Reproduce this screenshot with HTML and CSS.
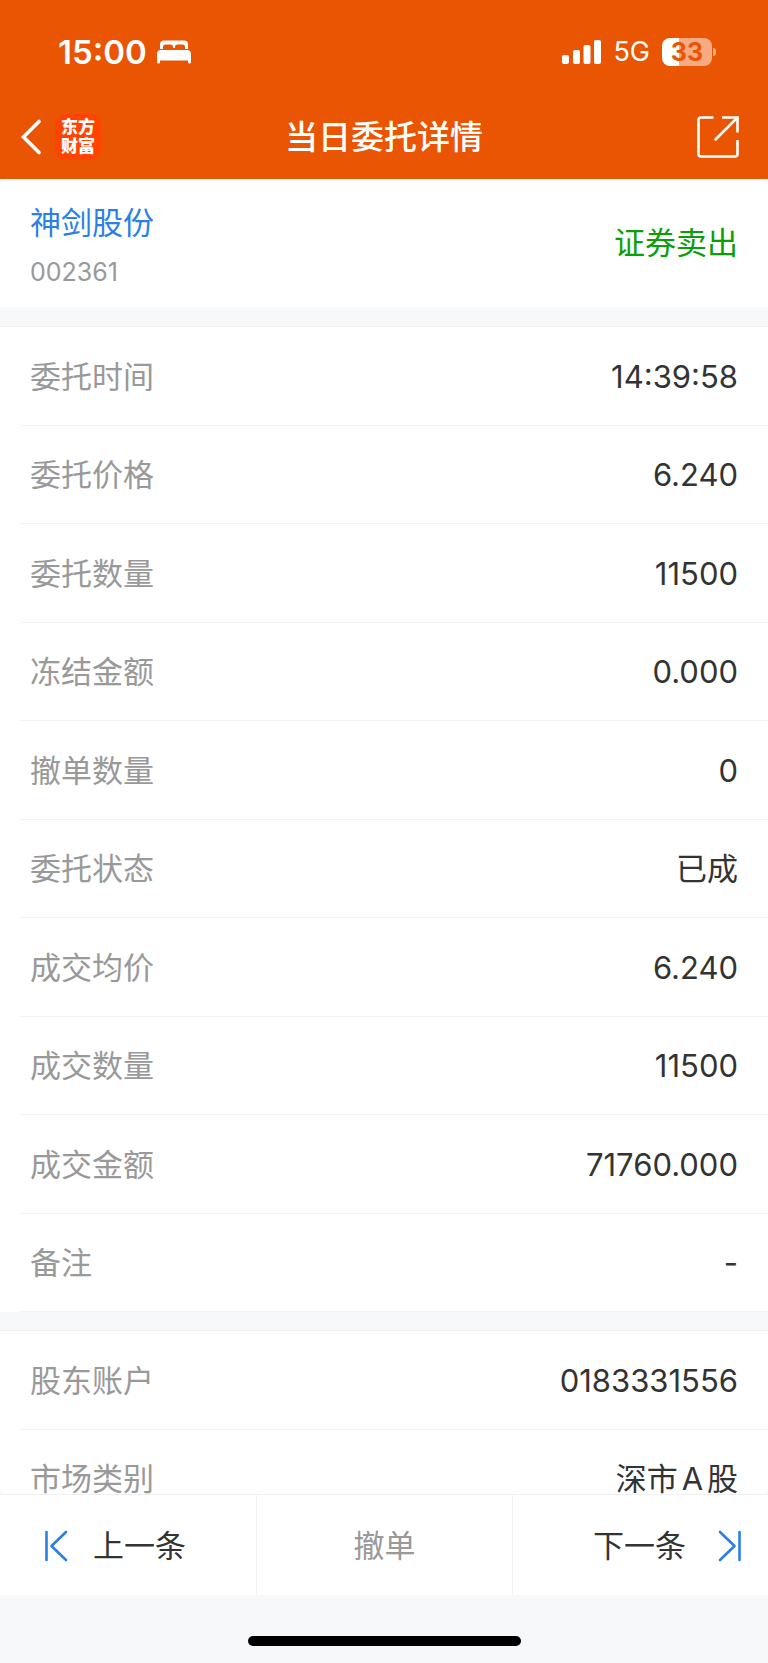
FILE: index.html
```html
<!DOCTYPE html>
<html lang="zh-CN">
<head>
<meta charset="utf-8">
<meta name="viewport" content="width=device-width, initial-scale=1">
<title>当日委托详情</title>
<link rel="stylesheet" href="styles.css">
</head>
<body>
<div class="app">
  <header class="header">
    <div class="status">
      <div class="status-left">
        <span class="clock">15:00</span>
        <svg class="bed" viewBox="0 0 34 24" width="34" height="24" aria-hidden="true">
          <path fill="#fff" d="M3 9V4.500Q3 .5 7 .5H27Q31 .5 31 4.500V9H28V7Q28 4.500 25.500 4.500H20.500Q18 4.500 18 7V8H16V7Q16 4.500 13.500 4.500H8.500Q6 4.500 6 7V9Z"/>
          <path fill="#fff" d="M4 10H30Q34 10 34 14V22Q34 23.500 32.500 23.500Q31 23.500 31 22V20.500H3V22Q3 23.500 1.500 23.500Q0 23.500 0 22V14Q0 10 4 10Z"/>
        </svg>
      </div>
      <div class="status-right">
        <svg class="signal" viewBox="0 0 39 24" width="39" height="24" aria-hidden="true" fill="#fff">
          <rect x="0" y="15" width="7" height="9" rx="2"/>
          <rect x="11" y="10" width="7" height="14" rx="2"/>
          <rect x="21.500" y="5" width="7" height="19" rx="2"/>
          <rect x="32" y="0" width="7" height="24" rx="2"/>
        </svg>
        <span class="network">5G</span>
        <span class="battery"><span class="battery-body">33</span><span class="battery-tip"></span></span>
      </div>
    </div>
    <nav class="nav">
      <div class="nav-left">
        <button class="icon-button" type="button" aria-label="返回">
          <svg viewBox="0 0 20 36" width="20" height="36" fill="none" stroke="#fff" stroke-width="3.600" stroke-linecap="round"><path d="M18 2.500 2.500 18 18 33.500"/></svg>
        </button>
        <span class="logo">东方<br>财富</span>
      </div>
      <h1 class="title">当日委托详情</h1>
      <div class="nav-right">
        <button class="icon-button" type="button" aria-label="分享">
          <svg viewBox="0 0 42 42" width="42" height="42" fill="none" stroke="#fff" stroke-width="2.600"><path d="M16.500 1.500H4Q1.500 1.500 1.500 4V38Q1.500 40.500 4 40.500H38Q40.500 40.500 40.500 38V24M25 1.500H40.500V16.500"/><path stroke-linecap="round" d="M40 2 18.500 23.500"/></svg>
        </button>
      </div>
    </nav>
  </header>

  <main class="content">
    <section class="stock">
      <div class="stock-id">
        <a class="stock-name" href="#">神剑股份</a>
        <span class="stock-code">002361</span>
      </div>
      <span class="side">证券卖出</span>
    </section>

    <dl class="list">
      <div class="row"><dt>委托时间</dt><dd>14:39:58</dd></div>
      <div class="row"><dt>委托价格</dt><dd>6.240</dd></div>
      <div class="row"><dt>委托数量</dt><dd>11500</dd></div>
      <div class="row"><dt>冻结金额</dt><dd>0.000</dd></div>
      <div class="row"><dt>撤单数量</dt><dd>0</dd></div>
      <div class="row"><dt>委托状态</dt><dd>已成</dd></div>
      <div class="row"><dt>成交均价</dt><dd>6.240</dd></div>
      <div class="row"><dt>成交数量</dt><dd>11500</dd></div>
      <div class="row"><dt>成交金额</dt><dd>71760.000</dd></div>
      <div class="row"><dt>备注</dt><dd>-</dd></div>
    </dl>

    <dl class="list">
      <div class="row"><dt>股东账户</dt><dd>0183331556</dd></div>
      <div class="row"><dt>市场类别</dt><dd>深市A股</dd></div>
    </dl>
  </main>

  <footer class="footer">
    <div class="actions">
      <button class="action action-prev" type="button">
        <svg viewBox="0 0 24 32" width="24" height="32" fill="none" stroke="#2b7fe6" stroke-width="2.600" stroke-linecap="round" stroke-linejoin="round" aria-hidden="true"><path d="M2.500 2V30M22 2 7.500 16 22 30"/></svg>
        上一条
      </button>
      <button class="action action-cancel" type="button" disabled>撤单</button>
      <button class="action action-next" type="button">
        下一条
        <svg viewBox="0 0 24 32" width="24" height="32" fill="none" stroke="#2b7fe6" stroke-width="2.600" stroke-linecap="round" stroke-linejoin="round" aria-hidden="true"><path d="M21.500 2V30M2 2 16.500 16 2 30"/></svg>
      </button>
    </div>
    <div class="home"><span class="home-bar"></span></div>
  </footer>
</div>
</body>
</html>
```
FILE: styles.css
```css
* {
  box-sizing: border-box;
}

body {
  margin: 0;
  background: #f6f8fa;
  color: #333;
  font-family: Inter, "Noto Sans CJK SC", sans-serif;
  font-size: 31px;
  line-height: 36px;
  text-autospace: normal;
}

svg {
  display: block;
  flex: none;
}

button {
  margin: 0;
  border: 0;
  background: none;
  color: inherit;
  font: inherit;
}

.app {
  display: flex;
  flex-direction: column;
  height: 100vh;
}

/* Header */

.header {
  flex: none;
  background: #ea5504;
  color: #fff;
}

.status {
  display: flex;
  justify-content: space-between;
  align-items: center;
  height: 103px;
  padding: 0 52px 0 58px;
}

.status-left,
.status-right,
.battery {
  display: flex;
  align-items: center;
}

.status-left {
  gap: 10px;
}

.status-right {
  gap: 12px;
}

.clock {
  font-size: 33px;
  font-weight: 600;
}

.network {
  font-size: 27px;
}

.battery {
  gap: 1px;
}

.battery-body {
  width: 50px;
  border-radius: 8px;
  background: linear-gradient(to right, #fff 17px, #f6ab82 17px);
  color: #ea5504;
  font-size: 25px;
  font-weight: 700;
  line-height: 28px;
  text-align: center;
}

.battery-tip {
  width: 3px;
  height: 8px;
  border-radius: 0 4px 4px 0;
  background: #f6ab82;
}

.nav {
  display: grid;
  grid-template-columns: 1fr auto 1fr;
  align-items: center;
  height: 76px;
  padding: 0 21px 8px;
}

.nav-left {
  display: flex;
  align-items: center;
  gap: 14px;
}

.nav-right {
  display: flex;
  justify-content: flex-end;
  padding-right: 8px;
}

.icon-button {
  padding: 0;
}

.logo {
  padding: 4px 6px;
  border-radius: 10px;
  background: #ff4300;
  font-size: 17px;
  font-weight: 900;
  line-height: 19px;
}

.title {
  margin: 0;
  font-size: 33px;
  font-weight: 500;
}

/* Scrolling content */

.content {
  flex: 1;
  min-height: 0;
  overflow: hidden;
  border-radius: 8px;
}

.stock {
  display: flex;
  justify-content: space-between;
  align-items: center;
  padding: 26px 30px 19px;
  background: #fff;
}

.stock-id {
  display: flex;
  flex-direction: column;
  gap: 15px;
}

.stock-name {
  color: #2b7fe6;
  text-decoration: none;
}

.stock-code {
  color: #999;
  font-size: 25px;
  line-height: 32px;
}

.side {
  padding-bottom: 8px;
  color: #07a007;
}

.list {
  margin: 19px 0 0;
  border-top: 1px solid #f0f0f0;
  background: #fff;
}

.list + .list {
  margin-top: 18px;
}

.row {
  display: flex;
  justify-content: space-between;
  align-items: center;
  height: 99px;
  margin-left: 20px;
  padding: 1px 30px 0 10px;
  border-bottom: 1px solid #f1f2f3;
}

.row:nth-child(even) {
  height: 98px;
}

.row dt {
  color: #999;
}

.row dd {
  margin: 0;
}

/* Bottom bar */

.footer {
  flex: none;
}

.actions {
  display: grid;
  grid-template-columns: repeat(3, 1fr);
  height: 101px;
  border-top: 1px solid #f0f0f0;
  background: #fff;
}

.action {
  display: flex;
  align-items: center;
  padding: 2px 0 0;
}

.action + .action {
  border-left: 1px solid #f1f2f3;
}

.action-prev {
  gap: 25px;
  padding-left: 44px;
}

.action-cancel {
  justify-content: center;
  color: #999;
}

.action-next {
  justify-content: flex-end;
  gap: 32px;
  padding-right: 26px;
}

.home {
  display: flex;
  justify-content: center;
  align-items: flex-end;
  height: 68px;
  padding-bottom: 17px;
}

.home-bar {
  width: 273px;
  height: 10px;
  border-radius: 5px;
  background: #000;
}
```
